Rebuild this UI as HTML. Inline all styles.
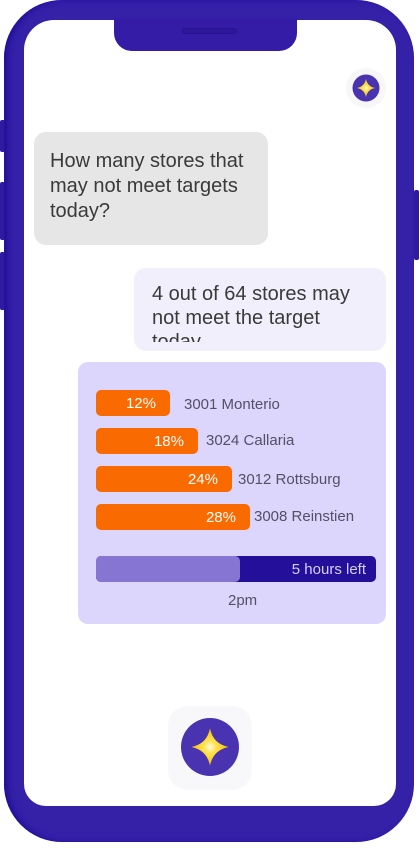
<!DOCTYPE html>
<html><head><meta charset="utf-8"><style>
*{margin:0;padding:0;box-sizing:border-box}
body{width:420px;height:848px;background:#fff;position:relative;overflow:hidden;font-family:"Liberation Sans",sans-serif}
.abs{position:absolute}
.frame{left:4px;top:0;width:410px;height:842px;border-radius:58px;background:#3520a8;box-shadow:inset 4px 0 6px #22109a}
.screen{left:24px;top:20px;width:372px;height:786px;background:#fff;border-radius:30px 30px 22px 22px;overflow:hidden}
.notch{left:114px;top:18px;width:183px;height:33px;background:#341ca6;border-radius:0 0 18px 18px}
.btn{background:#2f1aa0}
.bar{left:96px;height:26px;background:#f96a00;border-radius:5px;color:#fff;font-size:15px;line-height:28px;text-align:right;padding-right:14px}
.lbl{font-size:15px;color:#555066;line-height:26px}
</style></head><body>
<div class="abs btn" style="left:0;top:120px;width:5px;height:32px;border-radius:2px"></div>
<div class="abs btn" style="left:0;top:182px;width:5px;height:58px;border-radius:2px"></div>
<div class="abs btn" style="left:0;top:252px;width:5px;height:58px;border-radius:2px"></div>
<div class="abs btn" style="left:414px;top:190px;width:5px;height:70px;border-radius:2px"></div>
<div class="abs frame"></div>
<div class="abs screen"></div>
<div class="abs notch"><div class="abs" style="left:68px;top:10px;width:55px;height:6px;border-radius:3px;background:#2c169a;border:1px solid #271290"></div></div>
<div class="abs" style="left:346px;top:68px;width:40px;height:40px;border-radius:50%;background:#f7f7fa"></div>
<svg class="abs" style="left:352px;top:74px" width="28" height="28" viewBox="0 0 28 28"><defs><radialGradient id="g"><stop offset="0" stop-color="#fffbe0"/><stop offset=".35" stop-color="#ffe14a"/><stop offset="1" stop-color="#f6c400"/></radialGradient></defs><circle cx="14" cy="14" r="13.5" fill="#4a33b0"/><path d="M14 5 Q15.5 12.5 23 14 Q15.5 15.5 14 23 Q12.5 15.5 5 14 Q12.5 12.5 14 5Z" fill="url(#g)"/></svg>
<div class="abs" style="left:34px;top:132px;width:234px;height:113px;background:#e6e6e6;border-radius:12px;padding:17px 16px;font-size:20px;line-height:25px;color:#3a3a3a">How many stores that may not meet targets today?</div>
<div class="abs" style="left:134px;top:268px;width:252px;height:83px;background:#f1effc;border-radius:12px"></div>
<div class="abs" style="left:152px;top:282px;width:220px;height:60px;overflow:hidden;font-size:20px;line-height:24px;color:#3a3a3a">4 out of 64 stores may not meet the target today</div>
<div class="abs" style="left:78px;top:362px;width:308px;height:262px;background:#dcd5fc;border-radius:10px"></div>
<div class="abs bar" style="top:390px;width:74px">12%</div><div class="abs lbl" style="left:184px;top:392px">3001 Monterio</div>
<div class="abs bar" style="top:428px;width:102px">18%</div><div class="abs lbl" style="left:206px;top:428px">3024 Callaria</div>
<div class="abs bar" style="top:466px;width:136px">24%</div><div class="abs lbl" style="left:238px;top:467px">3012 Rottsburg</div>
<div class="abs bar" style="top:504px;width:154px">28%</div><div class="abs lbl" style="left:254px;top:504px">3008 Reinstien</div>
<div class="abs" style="left:96px;top:556px;width:280px;height:26px;background:#230f9a;border-radius:5px;overflow:hidden"><div style="width:144px;height:26px;background:#8775d4;border-radius:5px"></div><div class="abs" style="right:10px;top:0;color:#d6d0f5;font-size:15px;line-height:27px">5 hours left</div></div>
<div class="abs lbl" style="left:228px;top:588px">2pm</div>
<div class="abs" style="left:168px;top:706px;width:84px;height:84px;border-radius:20px;background:#f8f8fa"></div>
<svg class="abs" style="left:181px;top:718px" width="58" height="58" viewBox="0 0 28 28"><circle cx="14" cy="14" r="14" fill="#4a33b0"/><path d="M14 5 Q15.5 12.5 23 14 Q15.5 15.5 14 23 Q12.5 15.5 5 14 Q12.5 12.5 14 5Z" fill="url(#g)"/></svg>
</body></html>
